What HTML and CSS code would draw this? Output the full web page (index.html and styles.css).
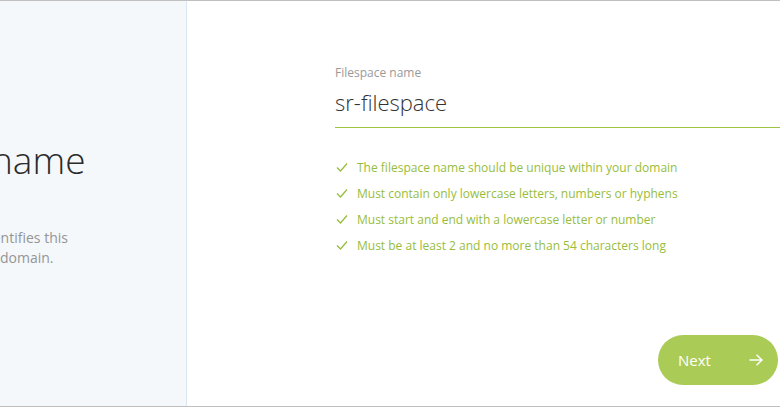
FILE: index.html
```html
<!DOCTYPE html>
<html lang="en">
<head>
<meta charset="utf-8">
<title>Filespace name</title>
<link rel="stylesheet" href="styles.css">
</head>
<body>
<div class="frame">
  <aside class="side">
    <div class="side-inner">
      <h1 class="side-title">Filespace name</h1>
      <p class="side-desc"><span class="ln ln1">A unique name that identifies this</span><span class="ln ln2">filespace within your domain.</span></p>
    </div>
  </aside>
  <main class="main">
    <div class="form">
      <label class="field-label" for="fs">Filespace name</label>
      <div class="field-value" id="fs">sr-filespace</div>
      <ul class="rules">
        <li class="rule"><svg class="tick" viewBox="0 0 12 10" width="12" height="10"><path d="M1 5.5 L4.5 9 L11 1.5" fill="none" stroke="currentColor" stroke-width="1.3"/></svg>The filespace name should be unique within your domain</li>
        <li class="rule"><svg class="tick" viewBox="0 0 12 10" width="12" height="10"><path d="M1 5.5 L4.5 9 L11 1.5" fill="none" stroke="currentColor" stroke-width="1.3"/></svg>Must contain only lowercase letters, numbers or hyphens</li>
        <li class="rule"><svg class="tick" viewBox="0 0 12 10" width="12" height="10"><path d="M1 5.5 L4.5 9 L11 1.5" fill="none" stroke="currentColor" stroke-width="1.3"/></svg>Must start and end with a lowercase letter or number</li>
        <li class="rule"><svg class="tick" viewBox="0 0 12 10" width="12" height="10"><path d="M1 5.5 L4.5 9 L11 1.5" fill="none" stroke="currentColor" stroke-width="1.3"/></svg>Must be at least 2 and no more than 54 characters long</li>
      </ul>
      <div class="actions">
        <button class="next" type="button"><span>Next</span><svg class="arrow" viewBox="0 0 14 12" width="14" height="12"><path d="M0.5 6 H13 M7.5 0.8 L13 6 L7.5 11.2" fill="none" stroke="currentColor" stroke-width="1.4"/></svg></button>
      </div>
    </div>
  </main>
</div>
</body>
</html>
```

FILE: styles.css
```css
* { box-sizing: border-box; }
html, body { margin: 0; padding: 0; }
body {
  font-family: "Open Sans", "Liberation Sans", sans-serif;
  background: #ffffff;
  width: 780px;
  height: 407px;
  overflow: hidden;
}
.frame {
  display: flex;
  height: 407px;
  border-top: 1px solid #bfbfbf;
  border-bottom: 1px solid #bfbfbf;
}
.side {
  width: 187px;
  flex: none;
  background: #f4f8fb;
  border-right: 1px solid #dbe6f1;
  overflow: hidden;
}
.side-inner {
  margin-left: -150px;
  padding-top: 134px;
  white-space: nowrap;
}
.side-title {
  margin: 0 0 0 -21px;
  font-weight: 300;
  font-size: 37px;
  line-height: 50px;
  color: #2b2b2b;
}
.side-desc {
  margin: 43px 0 0;
  font-size: 14px;
  line-height: 20px;
  color: #959595;
}
.ln { display: block; }
.ln1 { margin-left: -2px; }
.ln2 { margin-left: 12px; }
.main {
  flex: 1;
  padding-left: 148px;
  padding-top: 64px;
  overflow: hidden;
}
.form { display: flex; flex-direction: column; }
.field-label {
  font-size: 12px;
  line-height: 16px;
  color: #9a9a9a;
}
.field-value {
  margin-top: 6px;
  font-size: 22px;
  font-weight: 300;
  line-height: 30px;
  color: #333333;
  padding-bottom: 10px;
  border-bottom: 1px solid #9fc443;
}
.rules {
  list-style: none;
  margin: 26px 0 0;
  padding: 0;
}
.rule {
  display: flex;
  align-items: center;
  height: 26px;
  font-size: 12px;
  color: #97bd3c;
}
.tick {
  margin-left: 1px;
  margin-right: 9px;
  color: #97bd3c;
}
.actions {
  display: flex;
  justify-content: flex-end;
  margin-top: 77px;
  padding-right: 2px;
}
.next {
  display: flex;
  align-items: center;
  justify-content: space-between;
  width: 120px;
  height: 50px;
  border: none;
  border-radius: 25px;
  background: #abcb57;
  color: #ffffff;
  font-family: inherit;
  font-size: 15px;
  padding: 0 15px 0 20px;
}
.arrow { color: #ffffff; }
```
